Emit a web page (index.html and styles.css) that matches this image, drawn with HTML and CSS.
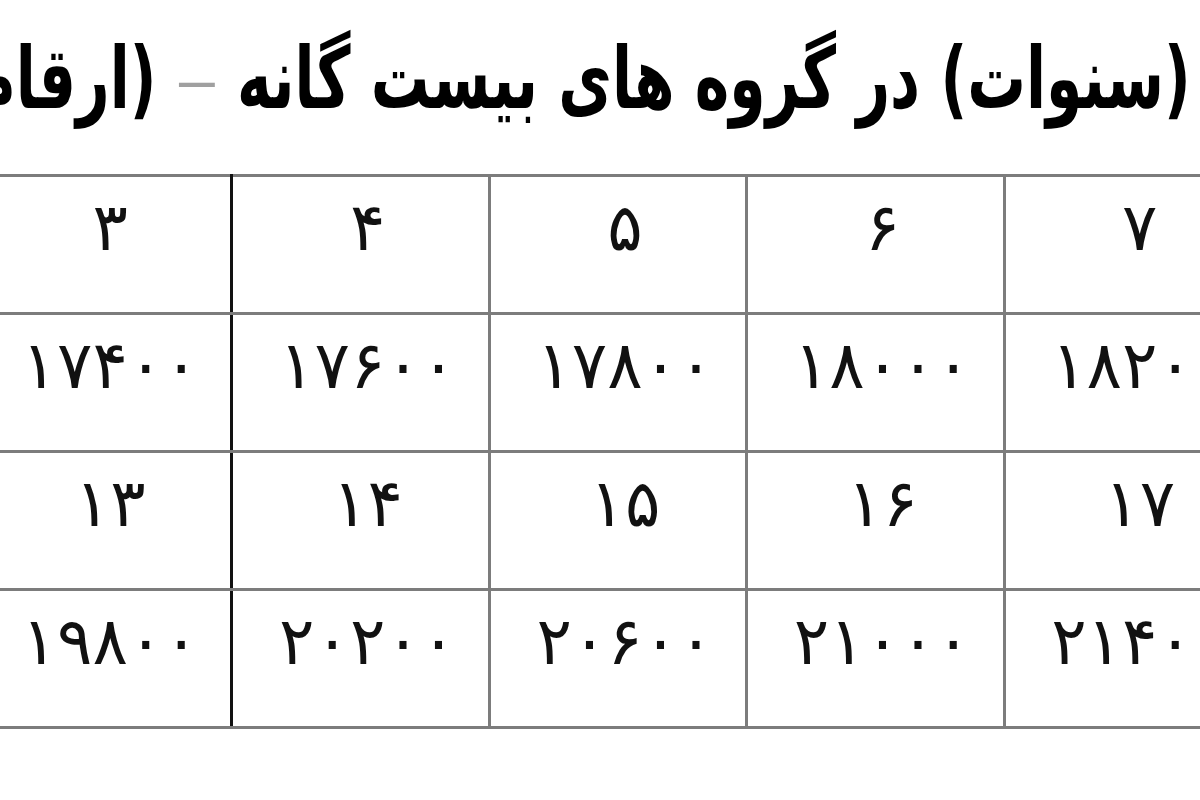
FILE: index.html
```html
<!DOCTYPE html>
<html lang="fa">
<head>
<meta charset="utf-8">
<title>جدول</title>
<link rel="stylesheet" href="styles.css">
</head>
<body>
<div class="page">
  <div class="title-wrap">
    <h1 class="title">(سنوات) در گروه های بیست گانه <span class="dash">—</span> (ارقام به هزار ریال)</h1>
  </div>
  <table class="grid">
    <tr>
      <td>۷</td><td>۶</td><td>۵</td><td class="c4">۴</td><td class="c3">۳</td>
    </tr>
    <tr>
      <td>۱۸۲۰۰</td><td>۱۸۰۰۰</td><td>۱۷۸۰۰</td><td class="c4">۱۷۶۰۰</td><td class="c3">۱۷۴۰۰</td>
    </tr>
    <tr>
      <td>۱۷</td><td>۱۶</td><td>۱۵</td><td class="c4">۱۴</td><td class="c3">۱۳</td>
    </tr>
    <tr>
      <td>۲۱۴۰۰</td><td>۲۱۰۰۰</td><td>۲۰۶۰۰</td><td class="c4">۲۰۲۰۰</td><td class="c3">۱۹۸۰۰</td>
    </tr>
  </table>
</div>
</body>
</html>
```
FILE: styles.css
```css
html, body {
  margin: 0;
  padding: 0;
  background: #ffffff;
}
.page {
  width: 1200px;
  height: 800px;
  overflow: hidden;
  background: #ffffff;
}
.title-wrap {
  height: 174px;
  overflow: hidden;
  direction: rtl;
  display: flex;
  align-items: flex-start;
}
.title {
  margin: 0;
  padding: 18px 14px 0 0;
  white-space: nowrap;
  font-family: "DejaVu Sans", sans-serif;
  font-weight: bold;
  font-size: 86px;
  line-height: 120px;
  color: #000;
  transform: scaleX(0.68);
  transform-origin: right top;
}
.dash {
  color: #a0a0a0;
  font-weight: normal;
  font-size: 0.68em;
  vertical-align: 0.12em;
}
.grid {
  direction: rtl;
  border-collapse: collapse;
  table-layout: fixed;
  width: 1290px;
  margin-left: -27px;
}
.grid td {
  height: 101px;
  padding: 0 0 34px 14px;
  border: 3px solid #7c7c7c;
  text-align: center;
  vertical-align: middle;
  font-family: "DejaVu Sans", sans-serif;
  font-size: 66px;
  line-height: 80px;
  color: #111;
  letter-spacing: 12px;
}
.grid td.c4 {
  border-left-color: #111;
}
.grid td.c3 {
  border-right-color: #111;
}
```
